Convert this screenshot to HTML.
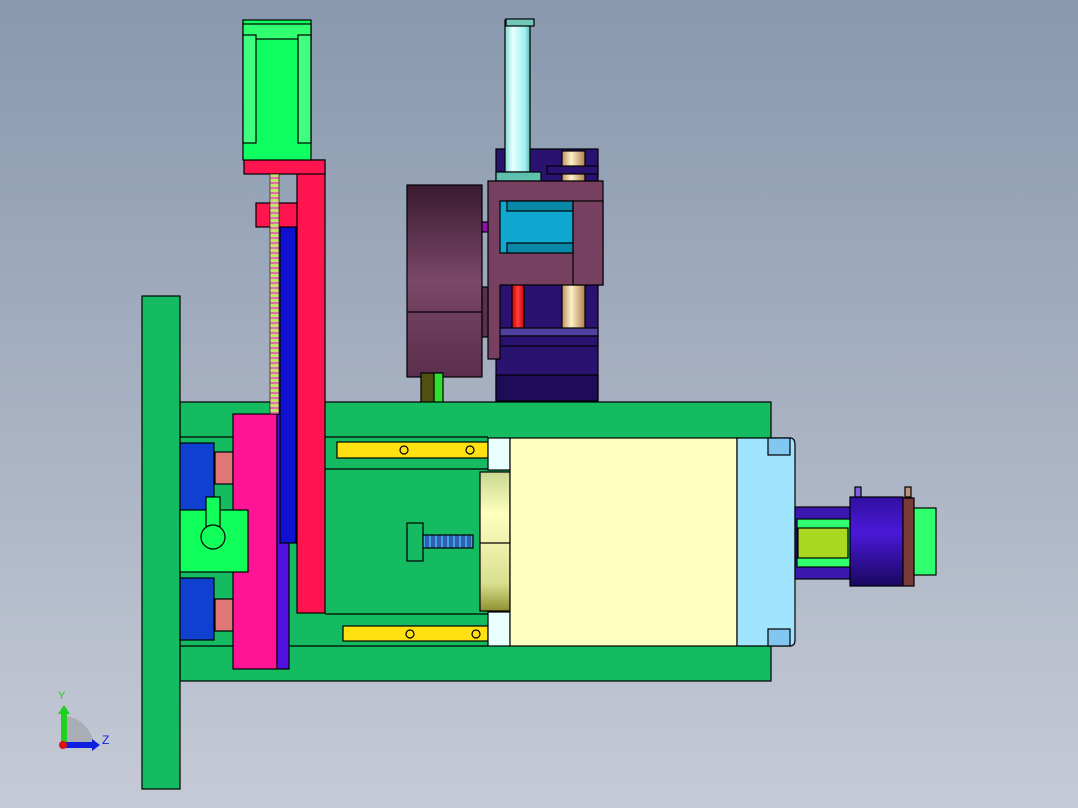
<!DOCTYPE html>
<html><head><meta charset="utf-8"><style>
html,body{margin:0;padding:0}
body{width:1078px;height:808px;overflow:hidden;background:linear-gradient(#8898ae,#c6cad6);font-family:"Liberation Sans",sans-serif}
svg{position:absolute;left:0;top:0}
</style></head><body>
<svg width="1078" height="808" viewBox="0 0 1078 808">
<defs>
<linearGradient id="cyl" x1="0" x2="1"><stop offset="0" stop-color="#7fd8d0"/><stop offset=".3" stop-color="#e8ffff"/><stop offset=".8" stop-color="#a0f0f0"/><stop offset="1" stop-color="#60b8b0"/></linearGradient>
<linearGradient id="beige" x1="0" x2="1"><stop offset="0" stop-color="#c09060"/><stop offset=".4" stop-color="#fff0c8"/><stop offset="1" stop-color="#b08050"/></linearGradient>
<linearGradient id="disk" x1="0" y1="0" x2="0" y2="1"><stop offset="0" stop-color="#3a1a30"/><stop offset=".5" stop-color="#7a4868"/><stop offset="1" stop-color="#5a2e4c"/></linearGradient>
<linearGradient id="flange" x1="0" y1="0" x2="0" y2="1"><stop offset="0" stop-color="#c8d890"/><stop offset=".3" stop-color="#ffffc0"/><stop offset=".8" stop-color="#d8e090"/><stop offset="1" stop-color="#909030"/></linearGradient>
<linearGradient id="hous" x1="0" y1="0" x2="0" y2="1"><stop offset="0" stop-color="#3010a0"/><stop offset=".4" stop-color="#4a18d8"/><stop offset="1" stop-color="#1a0860"/></linearGradient>
<linearGradient id="red" x1="0" x2="1"><stop offset="0" stop-color="#c00"/><stop offset=".5" stop-color="#ff4040"/><stop offset="1" stop-color="#c00"/></linearGradient>
<pattern id="screw" width="9" height="5" patternUnits="userSpaceOnUse"><rect width="9" height="5" fill="#c8e070"/><rect y="2" width="9" height="2" fill="#e070b0"/></pattern>
<pattern id="screw2" width="6" height="13" patternUnits="userSpaceOnUse"><rect width="6" height="13" fill="#3060b0"/><rect x="3" width="2" height="13" fill="#40a0e0"/></pattern>
</defs>
<g stroke="#000" stroke-width="1.2">
<rect x="496" y="149" width="102" height="252" fill="#2a1270"/>
<rect x="496" y="375" width="102" height="26" fill="#1e0c58"/>
<rect x="562" y="151" width="23" height="190" fill="url(#beige)"/>
<rect x="512" y="250" width="12" height="90" fill="url(#red)"/>
<rect x="496" y="328" width="102" height="8" fill="#5040a0"/>
<rect x="496" y="336" width="102" height="10" fill="#2a1270"/>
<rect x="505" y="20" width="25" height="152" fill="url(#cyl)"/>
<rect x="506" y="19" width="28" height="7" fill="#70c8b8"/>
<rect x="496" y="172" width="45" height="9" fill="#60c0b0"/>
<rect x="547" y="166" width="51" height="8" fill="#2a1270"/>
<path d="M488 181H603V285H500V359H488Z" fill="#784060"/>
<rect x="500" y="201" width="73" height="52" fill="#10a8d0"/>
<rect x="507" y="201" width="66" height="10" fill="#0a88a8"/>
<rect x="507" y="243" width="66" height="10" fill="#0a88a8"/>
<rect x="573" y="201" width="30" height="84" fill="#784060"/>
<rect x="407" y="185" width="75" height="192" fill="url(#disk)"/>
<line x1="407" y1="312" x2="482" y2="312"/>
<rect x="482" y="287" width="6" height="50" fill="#5a2e4c"/>
<rect x="482" y="222" width="6" height="10" fill="#9010b0"/>
<rect x="421" y="373" width="21" height="46" fill="#505010"/>
<rect x="434" y="373" width="9" height="46" fill="#30e030"/>
<rect x="180" y="402" width="591" height="279" fill="#14bb60"/>
<line x1="180" y1="437" x2="488" y2="437"/><line x1="325" y1="469" x2="488" y2="469"/>
<line x1="325" y1="614" x2="488" y2="614"/><line x1="180" y1="646" x2="488" y2="646"/>
<rect x="142" y="296" width="38" height="493" fill="#14bb60"/>
<rect x="180" y="443" width="34" height="82" fill="#1040d0"/>
<rect x="180" y="578" width="34" height="62" fill="#1040d0"/>
<rect x="215" y="452" width="18" height="32" fill="#e07878"/>
<rect x="215" y="599" width="18" height="32" fill="#e07878"/>
<rect x="233" y="414" width="44" height="255" fill="#ff1496"/>
<rect x="277" y="414" width="12" height="255" fill="#5010e0"/>
<rect x="280" y="210" width="16" height="333" fill="#1010d0"/>
<rect x="297" y="160" width="28" height="453" fill="#ff1450"/>
<rect x="244" y="160" width="81" height="14" fill="#ff1450"/>
<rect x="256" y="203" width="41" height="24" fill="#ff1450"/>
<rect x="270" y="174" width="9" height="240" fill="url(#screw)" stroke-width=".6"/>
<rect x="243" y="20" width="68" height="140" fill="#10ff60"/>
<rect x="243" y="24" width="68" height="15" fill="#30ff70"/>
<rect x="243" y="35" width="13" height="108" fill="#40ff80"/>
<rect x="298" y="35" width="13" height="108" fill="#40ff80"/>
<rect x="180" y="510" width="68" height="62" fill="#10ff5a"/>
<rect x="206" y="497" width="14" height="30" fill="#10ff5a"/>
<circle cx="213" cy="537" r="12" fill="#10ff5a"/>
<rect x="337" y="442" width="151" height="16" fill="#ffe010"/>
<rect x="343" y="626" width="145" height="15" fill="#ffe010"/>
<circle cx="404" cy="450" r="4" fill="#ffe010"/><circle cx="470" cy="450" r="4" fill="#ffe010"/>
<circle cx="410" cy="634" r="4" fill="#ffe010"/><circle cx="476" cy="634" r="4" fill="#ffe010"/>
<rect x="488" y="438" width="22" height="32" fill="#e8ffff"/>
<rect x="488" y="612" width="22" height="34" fill="#e8ffff"/>
<rect x="407" y="523" width="16" height="38" fill="#14bb60"/>
<rect x="423" y="535" width="50" height="13" fill="url(#screw2)"/>
<rect x="480" y="472" width="30" height="139" fill="url(#flange)"/>
<rect x="510" y="438" width="227" height="208" fill="#ffffc0"/>
<line x1="480" y1="543" x2="510" y2="543"/>
<path d="M737 438H790Q795 438 795 445V640Q795 646 790 646H737Z" fill="#a0e4ff"/>
<rect x="768" y="438" width="22" height="17" fill="#80c8f0"/>
<rect x="768" y="629" width="22" height="17" fill="#80c8f0"/>
<rect x="795" y="507" width="55" height="72" fill="#3a18b0"/>
<rect x="797" y="519" width="53" height="48" fill="#30ff70"/>
<rect x="798" y="528" width="50" height="30" fill="#a8d820"/>
<rect x="850" y="497" width="53" height="89" fill="url(#hous)"/>
<rect x="903" y="498" width="11" height="88" fill="#7a3c38"/>
<rect x="914" y="508" width="22" height="67" fill="#30ff70"/>
<rect x="855" y="487" width="6" height="10" fill="#8060e0"/>
<rect x="905" y="487" width="6" height="10" fill="#c09080"/>
</g>
<path d="M64 748V716A32 32 0 0 1 94 748Z" fill="#a0a4aa" opacity=".7"/>
<rect x="61" y="712" width="6" height="36" fill="#20d020"/>
<path d="M58 714L64 705L70 714Z" fill="#20d020"/>
<rect x="64" y="742" width="28" height="6" fill="#1020e0"/>
<path d="M92 739L100 745L92 751Z" fill="#1020e0"/>
<circle cx="63" cy="745" r="4" fill="#e01010"/>
<text x="58" y="699" font-size="11" fill="#20d020">Y</text>
<text x="102" y="744" font-size="12" fill="#1020e0">Z</text>
</svg>
</body></html>
